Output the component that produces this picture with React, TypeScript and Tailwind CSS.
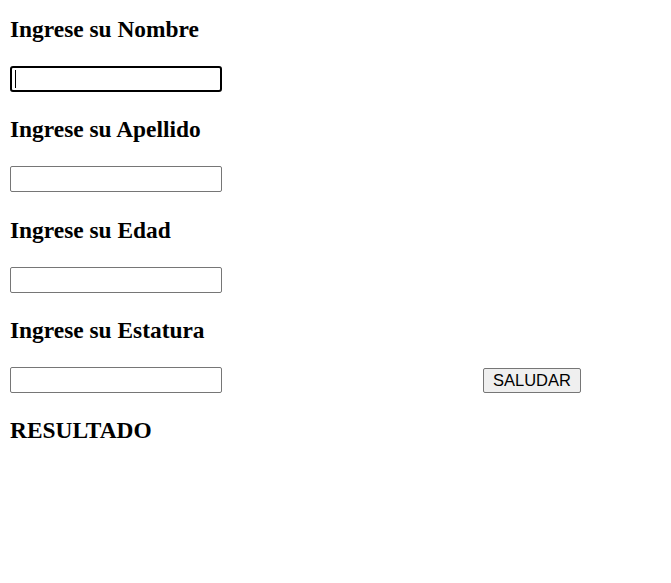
import React from 'react';

const serif = { fontFamily: '"Liberation Serif", "Times New Roman", serif' };

function Field({ label, focused, children }: { label: string; focused?: boolean; children?: React.ReactNode }) {
  return (
    <div className="flex flex-col">
      <h3 className="text-[23.4px] font-bold leading-[25px] h-[25px] text-black" style={serif}>
        {label}
      </h3>
      <div className="flex items-center mt-[24px] h-[26.3px]">
        {focused ? (
          <div className="w-[212px] h-[26px] border-2 border-black rounded-[3px] bg-white flex items-center pl-[3px]">
            <span className="w-px h-[18px] bg-black" />
          </div>
        ) : (
          <div className="w-[212px] h-[26px] border border-[#767676] rounded-[2px] bg-white" />
        )}
        {children}
      </div>
    </div>
  );
}

export default function App() {
  return (
    <div className="w-[671px] h-[583px] bg-white pl-[10px] pt-[17px] flex flex-col gap-[25px]">
      <Field label="Ingrese su Nombre" focused />
      <Field label="Ingrese su Apellido" />
      <Field label="Ingrese su Edad" />
      <Field label="Ingrese su Estatura">
        <button
          className="ml-[261px] h-[25px] px-[9px] border border-[#767676] rounded-[2px] bg-[#efefef] text-[16.5px] leading-none text-black"
          style={{ fontFamily: '"Liberation Sans", Arial, sans-serif' }}
        >
          SALUDAR
        </button>
      </Field>
      <h3 className="text-[23.4px] font-bold leading-[25px] h-[25px] text-black" style={serif}>
        RESULTADO
      </h3>
    </div>
  );
}
